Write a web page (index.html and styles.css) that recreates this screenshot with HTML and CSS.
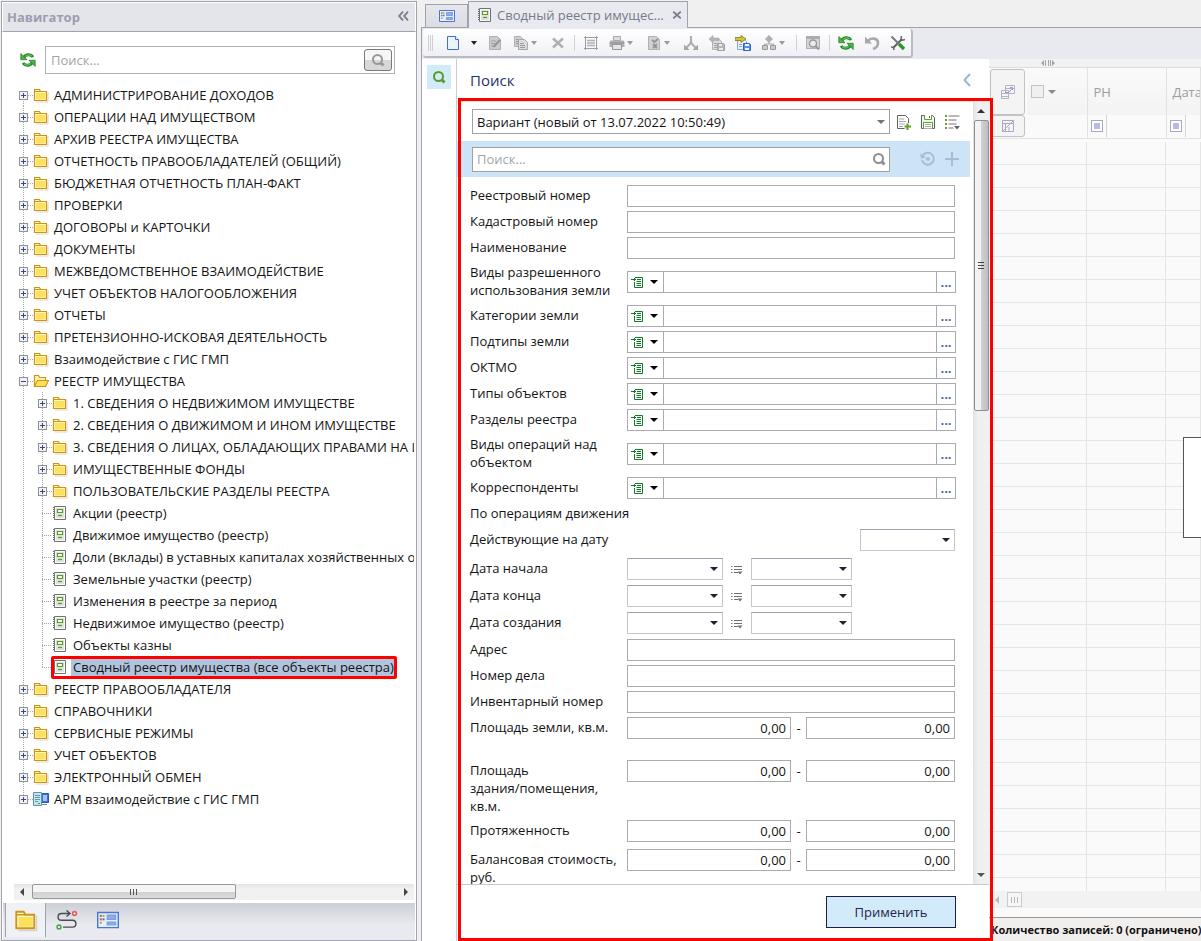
FILE: index.html
```html
<!DOCTYPE html>
<html lang="ru">
<head>
<meta charset="utf-8">
<title>Сводный реестр имущества</title>
<link rel="stylesheet" href="styles.css">
</head>
<body>
<svg class="sprite" aria-hidden="true">
  <symbol id="folder" viewBox="0 0 16 16"><path d="M3 15h12V5" fill="none" stroke="#d4d4d4"/><path d="M1.500 13.500v-11h5l1 2h6v9z" fill="#fff8cf" stroke="#cf9414" stroke-width="1.200"/><path d="M3 6h9.500v6.500H3z" fill="#fbe25a"/><path d="M1.500 4.500h6" stroke="#cf9414"/></symbol>
  <symbol id="folder-open" viewBox="0 0 16 16"><path d="M1.500 13.500v-11h4l1 2h6v3" fill="#fff3b0" stroke="#cf9414" stroke-width="1.200"/><path d="M1.500 13.500l3-6h11l-3 6z" fill="#fbe25a" stroke="#cf9414" stroke-width="1.200"/></symbol>
  <symbol id="registry" viewBox="0 0 16 16"><path d="M2.500 1.500h11v13h-11z" fill="#fafafa" stroke="#6f7174"/><path d="M1.500 2v12" stroke="#6f7174" stroke-dasharray="1 1"/><path d="M4 3h8v10H4z" fill="#dfe2df"/><path d="M5.500 4.500h5v3h-5z" fill="#fff" stroke="#5a9c22" stroke-width="1.200"/><path d="M6 10.500h4" stroke="#5a9c22" stroke-width="1.200"/></symbol>
  <symbol id="server" viewBox="0 0 16 16"><path d="M8.500 2.500h7v9h-7z" fill="#3f6fd0" stroke="#2f55a8"/><path d="M10 4h4v6h-4z" fill="#9fc4f5"/><path d="M9 13.500h5" stroke="#888"/><path d="M.5 1.500h8v13h-8z" fill="#c5e2ef" stroke="#5c93ad"/><path d="M2 4.500h5M2 6.500h5M2 8.500h5M2 10.500h3" stroke="#5d9bb5"/><path d="M5 12.500h2" stroke="#38a83c"/></symbol>
  <symbol id="refresh" viewBox="0 0 16 16"><path d="M4 5.500c1-3 6.500-4 9-.5M12 10.500c-1 3-6.500 4-9 .5" fill="none" stroke="#178a1b" stroke-width="3"/><path d="M4.500 5c1-2 5.500-3 7.500-.8M11.500 11c-1 2-5.500 3-7.500.8" fill="none" stroke="#7fd07a"/><path d="M.8 1.500v6.200H7zM15.200 14.500V8.300H9z" fill="#4db34a" stroke="#17781a" stroke-width=".7"/></symbol>
  <symbol id="lens" viewBox="0 0 16 16"><circle cx="7.500" cy="7.500" r="4.500" fill="none" stroke="currentColor" stroke-width="2"/><path d="M10.500 10.500l3 3" stroke="currentColor" stroke-width="3"/></symbol>
  <symbol id="board" viewBox="0 0 16 12"><path d="M.5.5h15v11H.5z" fill="#e4eefc" stroke="#4a76cf"/><path d="M7.500 2.500h6v3h-6zM7.500 7.500h6v2h-6z" fill="#8eb0ea" stroke="#7d9ee2"/><path d="M2 3h1.500" stroke="#5a9b3c" stroke-width="1.500"/><path d="M4 3h1.500" stroke="#e0963a" stroke-width="1.500"/><path d="M2 5.500h1.500" stroke="#d9534a" stroke-width="1.500"/><path d="M4 5.500h1.500" stroke="#4a76cf" stroke-width="1.500"/><path d="M2 8h1.500" stroke="#e0963a" stroke-width="1.500"/></symbol>
  <symbol id="route" viewBox="0 0 22 20"><path d="M14 3.500H5.500a3.300 3.300 0 0 0 0 6.800h11a3.300 3.300 0 0 1 0 6.800H7M10.500.5l3.500 3-3.500 3" fill="none" stroke="#4a4c52" stroke-width="1.400"/><circle cx="18.500" cy="3.500" r="1.900" fill="#fff" stroke="#e2604e" stroke-width="1.600"/><circle cx="3" cy="17" r="1.900" fill="#fff" stroke="#4fa04a" stroke-width="1.600"/></symbol>
  <symbol id="new" viewBox="0 0 16 16"><path d="M2.500 1.500h8l3 3v10h-11z" fill="#eaf4fe" stroke="#3f6fcf"/><path d="M10.500 1.500v3h3" fill="#fff" stroke="#3f6fcf"/></symbol>
  <symbol id="edit" viewBox="0 0 16 16"><path d="M2.500 1.500h8l3 3v10h-11z" fill="#cbcbcd" stroke="#b0b0b4"/><path d="M4 6h5M4 8.500h4M4 11h3" stroke="#a0a0a4"/><path d="M6.500 12L13 5" stroke="#949498" stroke-width="2.200"/></symbol>
  <symbol id="copy" viewBox="0 0 16 16"><path d="M1.500 1.500h6l2 2v8h-8z" fill="#cfcfd2" stroke="#b0b0b4"/><path d="M3 4.500h2M3 6.500h2M3 8.500h2" stroke="#9c9ca0"/><path d="M5.500 4.500h6l3 3v7h-9z" fill="#dcdcde" stroke="#a8a8ac"/><path d="M7 8.500h4M7 10.500h5M7 12.500h5" stroke="#9a9a9f"/></symbol>
  <symbol id="cross" viewBox="0 0 16 16"><path d="M3 3.500l10 9M13 3.500l-10 9" stroke="currentColor" stroke-width="2.500"/></symbol>
  <symbol id="frame" viewBox="0 0 16 16"><path d="M2.500 1v14M13.500 1v14M1 2.500h14M1 13.500h14" stroke="#9c9ca2"/><path d="M4 5.500h8M4 8h8M4 10.500h8" stroke="#b0b0b6" stroke-width="1.300"/></symbol>
  <symbol id="print" viewBox="0 0 16 16"><path d="M4.500 1.500h7v4h-7z" fill="#dedee0" stroke="#a6a6aa"/><path d="M1.500 5.500h13l1 1.500v5h-15V7z" fill="#b0b0b3"/><path d="M1 8h14" stroke="#8d8d92"/><path d="M3.500 9.500h9v5h-9z" fill="#e4e4e6" stroke="#98989d"/></symbol>
  <symbol id="check-doc" viewBox="0 0 16 16"><path d="M2.500 1.500h8l3 3v10h-11z" fill="#d2d2d4" stroke="#b0b0b4"/><path d="M6 5l2.500 2L12 4M7 9l4 4M11 9l-4 4" fill="none" stroke="#929297" stroke-width="1.800"/></symbol>
  <symbol id="branch" viewBox="0 0 16 16"><path d="M8 1v6M8 6c0 4-3 4-5 7M8 6c0 4 3 4 5 7" fill="none" stroke="#b0b0b4" stroke-width="2.200"/><path d="M1 9.500V15h5.500zM15 9.500V15H9.500z" fill="#a4a4a8"/></symbol>
  <symbol id="import" viewBox="0 0 16 16"><path d="M3.500 4.500h7l2 2v8h-9z" fill="#dcdcde" stroke="#b3b3b7"/><path d="M0 4l4-3.500V3h6v2.500H4V8z" fill="#b5b5b9" stroke="#9c9ca0" stroke-width=".5"/><path d="M5 8.500h3M5 10.500h3M5 12.500h3" stroke="#a4a4a8"/><path d="M8.500 8.500h6l1 1v6h-7z" fill="#b5b5b9" stroke="#a0a0a5"/><path d="M10 9h3v2h-3zM10 13h4v2h-4z" fill="#ececee"/></symbol>
  <symbol id="export" viewBox="0 0 16 16"><path d="M2.500 4.500h7l2 2v8h-9z" fill="#e8f1fd" stroke="#86a8dc"/><path d="M0 2.500h6V.5l5 3.500-5 3.500V5.500H0z" fill="#d6c534" stroke="#857610" stroke-width=".8"/><path d="M4 9.500h3M4 11.500h3" stroke="#86a8dc"/><path d="M8.500 8.500h6l1 1v6h-7z" fill="#5c8ae6" stroke="#2f62d0"/><path d="M10 9h4v2h-4zM10 13h4v2h-4z" fill="#eef4ff"/></symbol>
  <symbol id="org" viewBox="0 0 16 16"><path d="M8 6v3M3.500 11V9h9v2" fill="none" stroke="#a4a4a8"/><path d="M8 0l4 4-4 4-4-4z" fill="#b0b0b4"/><path d="M1.500 10.500h5v4h-5zM9.500 10.500h5v4h-5z" fill="#cacacd" stroke="#98989d"/></symbol>
  <symbol id="preview" viewBox="0 0 16 16"><path d="M1.500 1.500h13v12h-13z" fill="#d5d5d8" stroke="#b0b0b4"/><path d="M1 1h14v3H1z" fill="#adadb1"/><circle cx="8" cy="8.500" r="3.500" fill="#ececef" stroke="#97979c" stroke-width="1.400"/><path d="M10.500 11l3.500 3.500" stroke="#97979c" stroke-width="2"/></symbol>
  <symbol id="undo" viewBox="0 0 16 16"><path d="M4 6c3-4 10-3 10 2 0 3-2 5-5 6" fill="none" stroke="#a8a8ac" stroke-width="2.600"/><path d="M1 1.500v7h7z" fill="#a8a8ac"/></symbol>
  <symbol id="tools" viewBox="0 0 16 16"><path d="M12 4L3 13" stroke="#5d6064" stroke-width="2"/><path d="M11.500 1l-.5 3.500.8.800L15 4.500M1 12l2.500.5L4 15" fill="none" stroke="#6a6d71" stroke-width="1.600"/><path d="M1.500 1.500L9 9" stroke="#76797d" stroke-width="2"/><path d="M9 9l5 5" stroke="#279427" stroke-width="3.400"/></symbol>
  <symbol id="doc-add" viewBox="0 0 16 16"><path d="M1.500 1.500h8l3 3v10h-11z" fill="#fff" stroke="#606368"/><path d="M3 5h5M3 7.500h7M3 10h6M3 12.500h4" stroke="#a5a7aa"/><path d="M11.500 9v7M8 12.500h7.500" stroke="#fff" stroke-width="4"/><path d="M11.500 9.500V16M8.500 12.500H15" stroke="#5fa32a" stroke-width="2"/></symbol>
  <symbol id="save" viewBox="0 0 16 16"><path d="M1.500 1.500h11l2 2v11h-13z" fill="#eef6e8" stroke="#5d6064"/><path d="M4.500 1v4.500h7V1M3.500 14.500v-6h9v6" fill="#fff" stroke="#5fa32a"/><path d="M9.500 2v2" stroke="#5d6064"/><path d="M5 10.500h6M5 12.500h6" stroke="#a9abad"/></symbol>
  <symbol id="list-menu" viewBox="0 0 16 16"><path d="M1 2h2M1 6h2M1 10h2M1 14h2" stroke="#5fa32a" stroke-width="2"/><path d="M4.500 2h11M4.500 6h8M4.500 10h8M4.500 14h5" stroke="#a2a4a7" stroke-width="1.400"/><path d="M10 12h6l-3 3.500z" fill="#606368"/></symbol>
  <symbol id="history" viewBox="0 0 16 16"><path d="M2.500 5a6 6 0 1 1-.5 4" fill="none" stroke="#a6bdd5" stroke-width="2"/><path d="M0 2.500l1 5 5-1z" fill="#a6bdd5"/><circle cx="8" cy="8" r="2" fill="#a6bdd5"/></symbol>
  <symbol id="plus" viewBox="0 0 16 16"><path d="M8 1v14M1 8h14" stroke="#a6bdd5" stroke-width="2"/></symbol>
  <symbol id="pick" viewBox="0 0 12 12"><path d="M4 1.500h7.500v10h-8V6" fill="none" stroke="#0f7a26"/><path d="M0 3.500h5M3.500 2v3M6 3.500h4M5.500 5.500H10M5.500 7.500H10M5.500 9.500H10" stroke="#0f7a26"/></symbol>
  <symbol id="range" viewBox="0 0 12 12"><path d="M0 3.500h1.500M0 6.500h1.500M0 9.500h1.500" stroke="#6e7074"/><path d="M3 3.500h8M3 6.500h8M3 9.500h4" stroke="#6e7074"/><path d="M6.500 8.500h5L9 11.500z" fill="#6e7074"/></symbol>
  <symbol id="group" viewBox="0 0 16 16"><path d="M5.500 1.500h9v8h-9zM1.500 6.500h7v8h-7z" fill="#f4f4fa" stroke="#b3b3c6"/><path d="M5.500 4.500h9M1.500 9.500h7M1.500 12.500h7" stroke="#b3b3c6"/><path d="M5 8.500h4l3-4M10 3.500h2.500V6" fill="none" stroke="#9d9db8"/></symbol>
  <symbol id="no-filter" viewBox="0 0 16 16"><path d="M2.500 2.500h11v11h-11z" fill="#f3f3fa" stroke="#a9a9c0"/><path d="M3 5.500h10M5.500 6v7M9 9v4M3 13L13 3" fill="none" stroke="#a9a9c0"/></symbol>
</svg>
<div class="app">
<aside class="nav">
  <header class="nav-head"><h1>Навигатор</h1><button class="bare collapse" aria-label="Свернуть"><svg width="11" height="10" viewBox="0 0 11 10"><path d="M5 .7L1.200 5 5 9.300M10 .7L6.200 5 10 9.300" fill="none" stroke="#77798c" stroke-width="1.800"/></svg></button></header>
  <div class="nav-search"><button class="bare" aria-label="Обновить"><svg class="i16"><use href="#refresh"/></svg></button>
    <div class="nav-box"><input type="text" aria-label="Поиск" placeholder="Поиск..."><button class="lens-btn" aria-label="Найти"><svg class="i16"><use href="#lens"/></svg></button></div></div>
  <div class="tree-wrap">
  <ul class="tree">
    <li><div class="node"><button class="exp" aria-label="Развернуть"></button><svg class="i16"><use href="#folder"/></svg><a href="#">АДМИНИСТРИРОВАНИЕ ДОХОДОВ</a></div></li>
    <li><div class="node"><button class="exp" aria-label="Развернуть"></button><svg class="i16"><use href="#folder"/></svg><a href="#">ОПЕРАЦИИ НАД ИМУЩЕСТВОМ</a></div></li>
    <li><div class="node"><button class="exp" aria-label="Развернуть"></button><svg class="i16"><use href="#folder"/></svg><a href="#">АРХИВ РЕЕСТРА ИМУЩЕСТВА</a></div></li>
    <li><div class="node"><button class="exp" aria-label="Развернуть"></button><svg class="i16"><use href="#folder"/></svg><a href="#">ОТЧЕТНОСТЬ ПРАВООБЛАДАТЕЛЕЙ (ОБЩИЙ)</a></div></li>
    <li><div class="node"><button class="exp" aria-label="Развернуть"></button><svg class="i16"><use href="#folder"/></svg><a href="#">БЮДЖЕТНАЯ ОТЧЕТНОСТЬ ПЛАН-ФАКТ</a></div></li>
    <li><div class="node"><button class="exp" aria-label="Развернуть"></button><svg class="i16"><use href="#folder"/></svg><a href="#">ПРОВЕРКИ</a></div></li>
    <li><div class="node"><button class="exp" aria-label="Развернуть"></button><svg class="i16"><use href="#folder"/></svg><a href="#">ДОГОВОРЫ и КАРТОЧКИ</a></div></li>
    <li><div class="node"><button class="exp" aria-label="Развернуть"></button><svg class="i16"><use href="#folder"/></svg><a href="#">ДОКУМЕНТЫ</a></div></li>
    <li><div class="node"><button class="exp" aria-label="Развернуть"></button><svg class="i16"><use href="#folder"/></svg><a href="#">МЕЖВЕДОМСТВЕННОЕ ВЗАИМОДЕЙСТВИЕ</a></div></li>
    <li><div class="node"><button class="exp" aria-label="Развернуть"></button><svg class="i16"><use href="#folder"/></svg><a href="#">УЧЕТ ОБЪЕКТОВ НАЛОГООБЛОЖЕНИЯ</a></div></li>
    <li><div class="node"><button class="exp" aria-label="Развернуть"></button><svg class="i16"><use href="#folder"/></svg><a href="#">ОТЧЕТЫ</a></div></li>
    <li><div class="node"><button class="exp" aria-label="Развернуть"></button><svg class="i16"><use href="#folder"/></svg><a href="#">ПРЕТЕНЗИОННО-ИСКОВАЯ ДЕЯТЕЛЬНОСТЬ</a></div></li>
    <li><div class="node"><button class="exp" aria-label="Развернуть"></button><svg class="i16"><use href="#folder"/></svg><a href="#">Взаимодействие с ГИС ГМП</a></div></li>
    <li><div class="node"><button class="exp exp-open" aria-label="Свернуть"></button><svg class="i16"><use href="#folder-open"/></svg><a href="#">РЕЕСТР ИМУЩЕСТВА</a></div>
      <ul>
        <li><div class="node"><button class="exp" aria-label="Развернуть"></button><svg class="i16"><use href="#folder"/></svg><a href="#">1. СВЕДЕНИЯ О НЕДВИЖИМОМ ИМУЩЕСТВЕ</a></div></li>
        <li><div class="node"><button class="exp" aria-label="Развернуть"></button><svg class="i16"><use href="#folder"/></svg><a href="#">2. СВЕДЕНИЯ О ДВИЖИМОМ И ИНОМ ИМУЩЕСТВЕ</a></div></li>
        <li><div class="node"><button class="exp" aria-label="Развернуть"></button><svg class="i16"><use href="#folder"/></svg><a href="#">3. СВЕДЕНИЯ О ЛИЦАХ, ОБЛАДАЮЩИХ ПРАВАМИ НА И</a></div></li>
        <li><div class="node"><button class="exp" aria-label="Развернуть"></button><svg class="i16"><use href="#folder"/></svg><a href="#">ИМУЩЕСТВЕННЫЕ ФОНДЫ</a></div></li>
        <li><div class="node"><button class="exp" aria-label="Развернуть"></button><svg class="i16"><use href="#folder"/></svg><a href="#">ПОЛЬЗОВАТЕЛЬСКИЕ РАЗДЕЛЫ РЕЕСТРА</a></div></li>
        <li><div class="node leaf"><svg class="i16"><use href="#registry"/></svg><a href="#">Акции (реестр)</a></div></li>
        <li><div class="node leaf"><svg class="i16"><use href="#registry"/></svg><a href="#">Движимое имущество (реестр)</a></div></li>
        <li><div class="node leaf"><svg class="i16"><use href="#registry"/></svg><a href="#">Доли (вклады) в уставных капиталах хозяйственных об</a></div></li>
        <li><div class="node leaf"><svg class="i16"><use href="#registry"/></svg><a href="#">Земельные участки (реестр)</a></div></li>
        <li><div class="node leaf"><svg class="i16"><use href="#registry"/></svg><a href="#">Изменения в реестре за период</a></div></li>
        <li><div class="node leaf"><svg class="i16"><use href="#registry"/></svg><a href="#">Недвижимое имущество (реестр)</a></div></li>
        <li><div class="node leaf"><svg class="i16"><use href="#registry"/></svg><a href="#">Объекты казны</a></div></li>
        <li><div class="node leaf"><span class="marked"><svg class="i16"><use href="#registry"/></svg><a class="selected" href="#">Сводный реестр имущества (все объекты реестра)</a></span></div></li>
      </ul></li>
    <li><div class="node"><button class="exp" aria-label="Развернуть"></button><svg class="i16"><use href="#folder"/></svg><a href="#">РЕЕСТР ПРАВООБЛАДАТЕЛЯ</a></div></li>
    <li><div class="node"><button class="exp" aria-label="Развернуть"></button><svg class="i16"><use href="#folder"/></svg><a href="#">СПРАВОЧНИКИ</a></div></li>
    <li><div class="node"><button class="exp" aria-label="Развернуть"></button><svg class="i16"><use href="#folder"/></svg><a href="#">СЕРВИСНЫЕ РЕЖИМЫ</a></div></li>
    <li><div class="node"><button class="exp" aria-label="Развернуть"></button><svg class="i16"><use href="#folder"/></svg><a href="#">УЧЕТ ОБЪЕКТОВ</a></div></li>
    <li><div class="node"><button class="exp" aria-label="Развернуть"></button><svg class="i16"><use href="#folder"/></svg><a href="#">ЭЛЕКТРОННЫЙ ОБМЕН</a></div></li>
    <li><div class="node"><button class="exp" aria-label="Развернуть"></button><svg class="i16"><use href="#server"/></svg><a href="#">АРМ взаимодействие с ГИС ГМП</a></div></li>
  </ul>
  </div>
  <div class="hscroll"><i class="arr left"></i><div class="track"><div class="hthumb"><i class="grip"></i></div></div><i class="arr right"></i></div>
  <nav class="nav-tabs">
    <button class="nav-tab current" aria-label="Папки"><svg width="24" height="24"><use href="#folder"/></svg></button>
    <button class="nav-tab" aria-label="Маршруты"><svg width="22" height="20"><use href="#route"/></svg></button>
    <button class="nav-tab" aria-label="Рабочий стол"><svg width="22" height="18"><use href="#board"/></svg></button>
  </nav>
</aside>
<main class="main">
  <div class="tabs">
    <button class="tab tab-home" aria-label="Рабочий стол"><svg width="16" height="12"><use href="#board"/></svg></button>
    <div class="tab tab-doc"><svg class="i16"><use href="#registry"/></svg><span>Сводный реестр имущес...</span><button class="bare close" aria-label="Закрыть"><svg width="12" height="12"><use href="#cross"/></svg></button></div>
  </div>
  <div class="band"><div class="toolbar">
    <i class="handle"></i>
    <button class="tool" aria-label="Создать"><svg class="i16"><use href="#new"/></svg></button><button class="tool-arrow" aria-label="Варианты создания"><i class="caret dark"></i></button>
    <button class="tool" aria-label="Изменить"><svg class="i16"><use href="#edit"/></svg></button>
    <button class="tool split" aria-label="Копировать"><svg class="i16"><use href="#copy"/></svg><i class="caret"></i></button>
    <button class="tool" aria-label="Удалить"><svg class="i16 grey"><use href="#cross"/></svg></button>
    <i class="sep"></i>
    <button class="tool" aria-label="Выделить"><svg class="i16"><use href="#frame"/></svg></button>
    <button class="tool split" aria-label="Печать"><svg class="i16"><use href="#print"/></svg><i class="caret"></i></button>
    <button class="tool split" aria-label="Проверка"><svg class="i16"><use href="#check-doc"/></svg><i class="caret"></i></button>
    <button class="tool" aria-label="Разделить"><svg class="i16"><use href="#branch"/></svg></button>
    <button class="tool" aria-label="Импорт"><svg class="i16"><use href="#import"/></svg></button>
    <button class="tool" aria-label="Экспорт"><svg class="i16"><use href="#export"/></svg></button>
    <button class="tool split" aria-label="Структура"><svg class="i16"><use href="#org"/></svg><i class="caret"></i></button>
    <i class="sep"></i>
    <button class="tool" aria-label="Просмотр"><svg class="i16"><use href="#preview"/></svg></button>
    <i class="sep"></i>
    <button class="tool" aria-label="Обновить"><svg class="i16"><use href="#refresh"/></svg></button>
    <button class="tool" aria-label="Отменить"><svg class="i16"><use href="#undo"/></svg></button>
    <button class="tool" aria-label="Настройка"><svg class="i16"><use href="#tools"/></svg></button>
  </div></div>
  <div class="work">
    <div class="rail"><button class="rail-btn" aria-label="Панель поиска"><svg class="i16"><use href="#lens"/></svg></button></div>
    <section class="panel">
      <header class="panel-head"><h2>Поиск</h2><button class="bare" aria-label="Скрыть"><svg width="8" height="14" viewBox="0 0 8 14"><path d="M7 1L1.500 7 7 13" fill="none" stroke="#9db4d0" stroke-width="2"/></svg></button></header>
      <div class="panel-body">
        <form class="form" id="filter">
          <div class="bar"><select class="variant" aria-label="Вариант"><option>Вариант (новый от 13.07.2022 10:50:49)</option></select>
            <div class="bar-icons"><button type="button" class="bare" aria-label="Новый вариант"><svg class="i16"><use href="#doc-add"/></svg></button><button type="button" class="bare" aria-label="Сохранить"><svg class="i16"><use href="#save"/></svg></button><button type="button" class="bare" aria-label="Список"><svg class="i16"><use href="#list-menu"/></svg></button></div></div>
          <div class="bar bar-blue"><div class="find"><input type="text" aria-label="Поиск поля" placeholder="Поиск..."><svg class="i16"><use href="#lens"/></svg></div>
            <div class="bar-icons"><button type="button" class="bare" aria-label="История"><svg class="i16"><use href="#history"/></svg></button><button type="button" class="bare" aria-label="Добавить"><svg class="i16"><use href="#plus"/></svg></button></div></div>
          <div class="rows">
            <div class="row"><label for="f1">Реестровый номер</label><input class="field" id="f1"></div>
            <div class="row"><label for="f2">Кадастровый номер</label><input class="field" id="f2"></div>
            <div class="row"><label for="f3">Наименование</label><input class="field" id="f3"></div>
            <div class="row tall"><label for="f4">Виды разрешенного использования земли</label><div class="ref"><button type="button" class="pick" aria-label="Условие"><svg class="i12"><use href="#pick"/></svg><i class="caret black"></i></button><input id="f4"><button type="button" class="more">...</button></div></div>
            <div class="row"><label for="f5">Категории земли</label><div class="ref"><button type="button" class="pick" aria-label="Условие"><svg class="i12"><use href="#pick"/></svg><i class="caret black"></i></button><input id="f5"><button type="button" class="more">...</button></div></div>
            <div class="row"><label for="f6">Подтипы земли</label><div class="ref"><button type="button" class="pick" aria-label="Условие"><svg class="i12"><use href="#pick"/></svg><i class="caret black"></i></button><input id="f6"><button type="button" class="more">...</button></div></div>
            <div class="row"><label for="f7">ОКТМО</label><div class="ref"><button type="button" class="pick" aria-label="Условие"><svg class="i12"><use href="#pick"/></svg><i class="caret black"></i></button><input id="f7"><button type="button" class="more">...</button></div></div>
            <div class="row"><label for="f8">Типы объектов</label><div class="ref"><button type="button" class="pick" aria-label="Условие"><svg class="i12"><use href="#pick"/></svg><i class="caret black"></i></button><input id="f8"><button type="button" class="more">...</button></div></div>
            <div class="row"><label for="f9">Разделы реестра</label><div class="ref"><button type="button" class="pick" aria-label="Условие"><svg class="i12"><use href="#pick"/></svg><i class="caret black"></i></button><input id="f9"><button type="button" class="more">...</button></div></div>
            <div class="row tall"><label for="f10">Виды операций над объектом</label><div class="ref"><button type="button" class="pick" aria-label="Условие"><svg class="i12"><use href="#pick"/></svg><i class="caret black"></i></button><input id="f10"><button type="button" class="more">...</button></div></div>
            <div class="row"><label for="f11">Корреспонденты</label><div class="ref"><button type="button" class="pick" aria-label="Условие"><svg class="i12"><use href="#pick"/></svg><i class="caret black"></i></button><input id="f11"><button type="button" class="more">...</button></div></div>
            <div class="row"><span class="caption">По операциям движения</span></div>
            <div class="row loose"><label for="f12">Действующие на дату</label><select class="date end" id="f12"></select></div>
            <div class="row dated"><label for="f13">Дата начала</label><div class="dates"><select class="date" id="f13"></select><svg class="i12"><use href="#range"/></svg><select class="date" aria-label="Дата начала, по"></select></div></div>
            <div class="row dated"><label for="f14">Дата конца</label><div class="dates"><select class="date" id="f14"></select><svg class="i12"><use href="#range"/></svg><select class="date" aria-label="Дата конца, по"></select></div></div>
            <div class="row dated"><label for="f15">Дата создания</label><div class="dates"><select class="date" id="f15"></select><svg class="i12"><use href="#range"/></svg><select class="date" aria-label="Дата создания, по"></select></div></div>
            <div class="row"><label for="f16">Адрес</label><input class="field" id="f16"></div>
            <div class="row"><label for="f17">Номер дела</label><input class="field" id="f17"></div>
            <div class="row"><label for="f18">Инвентарный номер</label><input class="field" id="f18"></div>
            <div class="row roomy"><label for="f19">Площадь земли, кв.м.</label><div class="nums"><input class="field" id="f19" value="0,00"><span>-</span><input class="field" aria-label="Площадь земли, до" value="0,00"></div></div>
            <div class="row triple"><label for="f20">Площадь<br>здания/помещения,<br>кв.м.</label><div class="nums"><input class="field" id="f20" value="0,00"><span>-</span><input class="field" aria-label="Площадь здания, до" value="0,00"></div></div>
            <div class="row loose"><label for="f21">Протяженность</label><div class="nums"><input class="field" id="f21" value="0,00"><span>-</span><input class="field" aria-label="Протяженность, до" value="0,00"></div></div>
            <div class="row"><label for="f22">Балансовая стоимость, руб.</label><div class="nums"><input class="field" id="f22" value="0,00"><span>-</span><input class="field" aria-label="Балансовая стоимость, до" value="0,00"></div></div>
          </div>
        </form>
        <div class="vscroll"><i class="arr up"></i><div class="vtrack"><div class="vthumb"><i class="grip"></i></div></div><i class="arr down"></i></div>
      </div>
      <footer class="panel-foot"><button class="apply" type="submit" form="filter">Применить</button></footer>
    </section>
    <section class="grid">
      <div class="splitter"><svg width="14" height="8" viewBox="0 0 14 8"><path d="M3 1L0 4l3 3zM11 1l3 3-3 3z" fill="#a4a4a4"/><path d="M4.500 1v6M7.500 1v6M9.500 1v6" stroke="#a4a4a4"/></svg></div>
      <table class="cols">
        <colgroup><col class="c-sel"><col class="c-check"><col class="c-rn"><col></colgroup>
        <thead>
          <tr class="names"><td><button class="cell-btn" aria-label="Группировка"><svg class="i16"><use href="#group"/></svg></button></td><th><span class="check-head"><input type="checkbox" aria-label="Выбрать все"><i class="caret mid"></i></span></th><th>РН</th><th>Дата</th></tr>
          <tr class="filters"><td><button class="cell-btn" aria-label="Сбросить фильтр"><svg class="i16"><use href="#no-filter"/></svg></button></td><td></td><td><div class="flt"><i></i></div></td><td><div class="flt"><i></i></div></td></tr>
        </thead>
      </table>
      <div class="cells"><i class="c-lead"></i><i class="c-rn"></i><i class="c-rest"></i></div>
      <div class="grid-scroll"><i class="arr left"></i><div class="mini"><i class="grip"></i></div></div>
      <div class="status">Количество записей: 0 (ограничено)</div>
      <div class="popup" role="dialog" aria-label="Загрузка"></div>
    </section>
  </div>
</main>
</div>
</body>
</html>
```
FILE: styles.css
```css
* { box-sizing: border-box; }
body { margin: 0; background: #f0f0f0; color: #141414; font: 13px/18px "Open Sans", "Noto Sans", sans-serif; }
button, input, select { font: inherit; color: inherit; margin: 0; border-radius: 0; }
input { min-width: 0; outline: none; }
input::placeholder { color: #a0a4aa; opacity: 1; }
h1, h2, ul { margin: 0; padding: 0; }
svg { display: block; flex: none; }
.sprite { position: absolute; width: 0; height: 0; }
.i16 { width: 16px; height: 16px; }
.i12 { width: 12px; height: 12px; }
.grey { color: #b0b0b4; }
.bare { display: block; padding: 0; border: 0; background: none; }
.app { display: flex; gap: 4px; height: 100vh; padding: 1px 0 0 1px; overflow: hidden; }

/* Navigator */
.nav { display: flex; flex-direction: column; flex: none; width: 416px; border: 1px solid #a0a2b0; background: #fff; }
.nav-head { display: flex; align-items: center; justify-content: space-between; height: 30px; padding: 0 6px 0 4px; border: 1px solid #fff; border-bottom: 1px solid #a0a2b0; background: #e4e5ea; }
.nav-head h1 { font-size: 13px; font-weight: 700; color: #9b9daf; }
.collapse { margin-bottom: 2px; }
.nav-search { display: flex; align-items: center; gap: 9px; padding: 14px 21px 10px 18px; }
.nav-box { display: flex; flex: 1; align-items: center; height: 28px; padding: 0 2px 0 5px; border: 1px solid #b0b2b8; }
.nav-box input { flex: 1; padding: 0; border: 0; background: none; }
.lens-btn { display: flex; align-items: center; justify-content: center; width: 28px; height: 22px; padding: 0; border: 1px solid #77797c; border-radius: 3px; background: linear-gradient(#f6f6f6 50%, #d8d8d8 50%); color: #96989a; }
.tree-wrap { flex: 1; min-height: 0; margin-right: 2px; padding-left: 17px; overflow: hidden; }
.tree, .tree ul { list-style: none; }
.tree ul { padding-left: 19px; }
.tree li { background: repeating-linear-gradient(#a8a8a8 0 1px, transparent 1px 2px) 4px 0 / 1px 100% no-repeat; }
.tree > li:first-child { background-position: 4px 11px; }
.tree > li:last-child, .tree ul > li:last-child { background-size: 1px 11px; }
.node { display: flex; align-items: center; height: 22px; white-space: nowrap; background: repeating-linear-gradient(90deg, #a8a8a8 0 1px, transparent 1px 2px) 9px 11px / 5px 1px no-repeat; }
.leaf { padding-left: 14px; background-position: 4px 11px; background-size: 9px 1px; }
.node a { margin-left: 3px; padding: 0 2px; color: inherit; text-decoration: none; }
.exp { flex: none; width: 9px; height: 9px; margin-right: 5px; padding: 0; border: 1px solid #909296; background: linear-gradient(#34498c, #34498c) center / 5px 1px no-repeat, linear-gradient(#34498c, #34498c) center / 1px 5px no-repeat, #f2f2f2; }
.exp-open { background: linear-gradient(#34498c, #34498c) center / 5px 1px no-repeat, #f2f2f2; }
.marked { display: flex; align-items: center; position: relative; }
.marked::after { content: ""; position: absolute; inset: -2px -1px -3px -1px; border: 3px solid #f00; border-radius: 2px; }
.node .selected { background: #b0c4de; }
.hscroll { display: flex; align-items: center; height: 16px; margin: 0 2px 3px 12px; padding: 0 6px; background: linear-gradient(#e3e3e3, #f1f1f1 30%); }
.track { flex: 1; height: 100%; margin: 0 8px; }
.hthumb { display: flex; align-items: center; justify-content: center; width: 56%; height: 15px; border: 1px solid #98999c; border-radius: 2px; background: linear-gradient(#f5f5f5 50%, #cfd0d2 50%, #dadbdd); }
.grip { width: 8px; height: 6px; background: repeating-linear-gradient(90deg, #55575a 0 1px, transparent 1px 3px); }
.arr { flex: none; width: 0; height: 0; border: 4px solid transparent; }
.left { border-width: 4px 4px 4px 0; border-right-color: #444; }
.right { border-width: 4px 0 4px 4px; border-left-color: #444; }
.up { border-width: 0 4px 4px; border-bottom-color: #333; }
.down { border-width: 4px 4px 0; border-top-color: #555; }
.nav-tabs { display: flex; height: 37px; margin: 0 1px; padding: 0 0 3px 2px; background: linear-gradient(#cdcfd8, #e9eaef 60%); }
.nav-tab { display: flex; align-items: center; justify-content: center; width: 41px; padding: 0; border: 0; background: none; }
.current { border: solid #a0a2b0; border-width: 0 1px; background: #f0f1f5; }

/* Tabs and toolbar */
.main { display: flex; flex-direction: column; flex: 1; min-width: 0; }
.tabs { display: flex; align-items: flex-end; height: 27px; padding-left: 4px; border-bottom: 1px solid #a0a2b0; }
.tab { display: flex; align-items: center; border: 1px solid #a0a2b0; border-bottom: 0; color: #77798c; }
.tab-home { justify-content: center; width: 43px; height: 23px; padding: 0; background: linear-gradient(#e6e7ec, #dcdde3); }
.tab-doc { gap: 4px; width: 220px; height: 27px; margin-bottom: -1px; padding: 0 4px 0 8px; background: #e9eaef; }
.tab-doc span { flex: 1; white-space: nowrap; }
.band { height: 31px; padding: 1px 0 2px 1px; border-left: 1px solid #a0a2b0; background: #e9eaef; }
.toolbar { display: flex; align-items: center; width: max-content; height: 29px; border: solid #b9bac4; border-width: 0 2px 2px 0; border-radius: 3px; background: linear-gradient(#fff, #eff0f4); }
.handle { width: 5px; height: 16px; margin: 0 7px 0 5px; background: repeating-linear-gradient(90deg, #cfd0d6 0 1px, transparent 1px 2px); }
.tool { display: flex; align-items: center; width: 26px; height: 24px; padding: 0 5px; border: 0; background: none; }
.split { gap: 2px; width: 37px; }
.tool-arrow { width: 16px; padding: 0 5px; border: 0; background: none; }
.sep { width: 1px; height: 16px; margin: 0 3px; background: #d0d0d6; }
.caret { display: block; flex: none; width: 0; height: 0; border: solid transparent; border-width: 4px 3px 0; border-top-color: #9a9aa0; }
.caret.dark { border-top-color: #1f1f35; }
.caret.black { border-width: 4px 4px 0; border-top-color: #000; }
.caret.mid { border-width: 4px 4px 0; border-top-color: #8a8a8a; }

/* Search panel */
.work { display: flex; flex: 1; min-height: 0; border-left: 1px solid #a0a2b0; }
.rail { flex: none; width: 34px; padding: 6px 5px; background: #fff; }
.rail-btn { display: flex; align-items: center; justify-content: center; width: 24px; height: 24px; padding: 0; border: 0; background: #d2eafa; color: #5a9c2c; }
.panel { display: flex; flex-direction: column; position: relative; z-index: 1; flex: none; width: 533px; border-left: 1px solid #ccc; background: #fff; }
.panel::after { content: ""; position: absolute; inset: 39px -4px 0 1px; border: 3px solid #f00; pointer-events: none; }
.panel-head { display: flex; align-items: center; justify-content: space-between; height: 42px; padding: 0 18px 0 13px; }
.panel-head h2 { font-size: 15px; font-weight: 400; color: #1f3467; }
.panel-body { display: flex; flex: 1; min-height: 0; border-top: 1px solid #ddd; border-bottom: 1px solid #c8c8c8; }
.form { flex: 1; min-width: 0; margin-right: 3px; overflow: hidden; }
.bar { display: flex; align-items: center; gap: 6px; height: 39px; padding: 0 7px 0 15px; }
.bar-icons { display: flex; flex: 1; gap: 8px; }
.bar-blue { height: 36px; background: #cde4f7; }
.bar-blue .bar-icons { justify-content: flex-end; padding-right: 3px; }
.variant, .find { width: 418px; height: 25px; border: 1px solid #9fa1a5; background: #fff; }
.variant, .date { appearance: none; padding: 0 4px; border-radius: 0; outline: none; }
.variant { background: url("data:image/svg+xml,%3Csvg xmlns='http://www.w3.org/2000/svg' width='8' height='4'%3E%3Cpath d='M0 0h8L4 4z' fill='%23707276'/%3E%3C/svg%3E") right 4px center no-repeat #fff; }
.find { display: flex; align-items: center; padding: 0 2px 0 4px; color: #8c8e92; }
.find input { flex: 1; padding: 0; border: 0; }
.rows { display: flex; flex-direction: column; gap: 4px; padding: 8px 15px 0 13px; }
.row { display: grid; grid-template-columns: 157px 1fr; align-items: start; flex: none; min-height: 22px; }
.row label, .caption { padding: 1px 8px 0 0; }
.caption { grid-column: 1 / -1; }
.row:last-child { height: 36px; }
.tall { min-height: 38px; }
.tall label { padding-top: 0; }
.tall .ref { margin-top: 8px; }
.loose { min-height: 25px; }
.dated { min-height: 23px; }
.roomy { min-height: 39px; }
.triple { min-height: 56px; }
.field { width: 100%; height: 22px; padding: 0 4px; border: 1px solid #a9abb0; background: #fff; }
.ref { display: flex; height: 22px; margin-right: -1px; border: 1px solid #a9abb0; }
.ref input { flex: 1; padding: 0 4px; border: 0; }
.pick, .more { display: flex; align-items: center; padding: 0; border: 0 solid #a9abb0; background: #fff; }
.pick { gap: 7px; width: 36px; padding-left: 3px; border-right-width: 1px; }
.more { justify-content: center; width: 19px; border-left-width: 1px; color: #3d6aa8; font-weight: 700; }
.date { width: 100%; height: 22px; border: 1px solid #c3c5cf; border-top-color: #a0a2b0; background: url("data:image/svg+xml,%3Csvg xmlns='http://www.w3.org/2000/svg' width='8' height='4'%3E%3Cpath d='M0 0h8L4 4z' fill='%231f1f35'/%3E%3C/svg%3E") right 4px center no-repeat #fff; }
.date.end { width: 95px; justify-self: end; }
.dates { display: grid; grid-template-columns: 96px 12px 101px; gap: 8px; align-items: center; }
.nums { display: grid; grid-template-columns: 164px 15px 1fr; align-items: center; text-align: center; }
.nums .field { text-align: right; }
.vscroll { display: flex; flex-direction: column; align-items: center; flex: none; width: 16px; padding: 7px 0 7px; background: linear-gradient(90deg, #e2e2e2, #f0f0f0 30%); }
.vtrack { flex: 1; width: 15px; margin: 7px 0 6px; }
.vthumb { display: flex; align-items: center; justify-content: center; height: 39%; border: 1px solid #8e9094; border-radius: 2px; background: linear-gradient(90deg, #f3f3f3 45%, #d0d1d3 50%, #bcbec2); }
.vthumb .grip { width: 6px; height: 8px; background: repeating-linear-gradient(#444 0 1px, transparent 1px 3px); }
.panel-foot { display: flex; justify-content: flex-end; height: 56px; padding: 11px 33px 0 0; }
.apply { width: 130px; height: 32px; border: 1px solid #1f1f45; background: #d2eafa; color: #22264a; }

/* Record grid */
.grid { display: flex; flex-direction: column; position: relative; flex: 1; min-width: 0; overflow: hidden; background: #fafafa; }
.splitter { height: 9px; padding-left: 52px; border-bottom: 1px solid #ddd; background: #f2f2f2; }
.cols { width: 100%; border-collapse: collapse; table-layout: fixed; color: #9c9c9c; }
.cols td, .cols th { padding: 0 0 0 1px; font-weight: 400; text-align: left; border-right: 1px solid #e2e2e2; }
.cols tr td:first-child { border: 0; }
.c-sel { width: 38px; }
.c-check { width: 60px; }
.c-rn { width: 79px; }
.cols .names th { padding-left: 6px; background: linear-gradient(#fafafa, #f3f3f3); overflow: hidden; }
.cols .names th:nth-child(2) { padding-left: 4px; }
.names { height: 47px; }
.filters { height: 23px; border-bottom: 1px solid #e2e2e2; }
.cell-btn { display: flex; align-items: center; justify-content: center; width: 35px; height: 46px; padding: 0; border: 1px solid #c2c2c2; border-radius: 3px; background: #f4f4f4; }
.filters .cell-btn { height: 22px; }
.check-head { display: flex; align-items: center; gap: 4px; }
.check-head input { appearance: none; width: 13px; height: 13px; border: 1px solid #c4c4c4; background: #f0f0f0; }
.flt { display: flex; align-items: center; width: 18px; height: 22px; padding-left: 2px; border-right: 1px solid #d4d4d4; }
.flt i { width: 12px; height: 12px; border: 1px solid #a9a9c0; background: #b9b9e6; box-shadow: inset 0 0 0 2px #fff; }
.cells { display: flex; flex: 1; margin-top: 3px; background: repeating-linear-gradient(transparent 0 22px, #e5e5e5 22px 23px); }
.cells i { flex: none; border-right: 1px solid #e5e5e5; }
.c-lead { width: 98px; }
.cells .c-rest { flex: 1; }
.grid-scroll { display: flex; align-items: center; gap: 8px; height: 17px; padding-left: 6px; background: #f2f2f2; }
.grid-scroll .left { border-right-color: #bbb; }
.mini { display: flex; align-items: center; justify-content: center; width: 15px; height: 15px; border: 1px solid #ccc; background: #f6f6f6; }
.mini .grip { background: repeating-linear-gradient(90deg, #bbb 0 1px, transparent 1px 3px); }
.status { height: 24px; margin-top: 9px; padding: 3px 0 0 2px; border-top: 1px solid #999; background: #f1eeee; font-size: 11px; font-weight: 700; color: #111; white-space: nowrap; }
.popup { position: absolute; left: 194px; right: -60px; top: 378px; height: 101px; border: 1px solid #555; background: #fff; }
```
